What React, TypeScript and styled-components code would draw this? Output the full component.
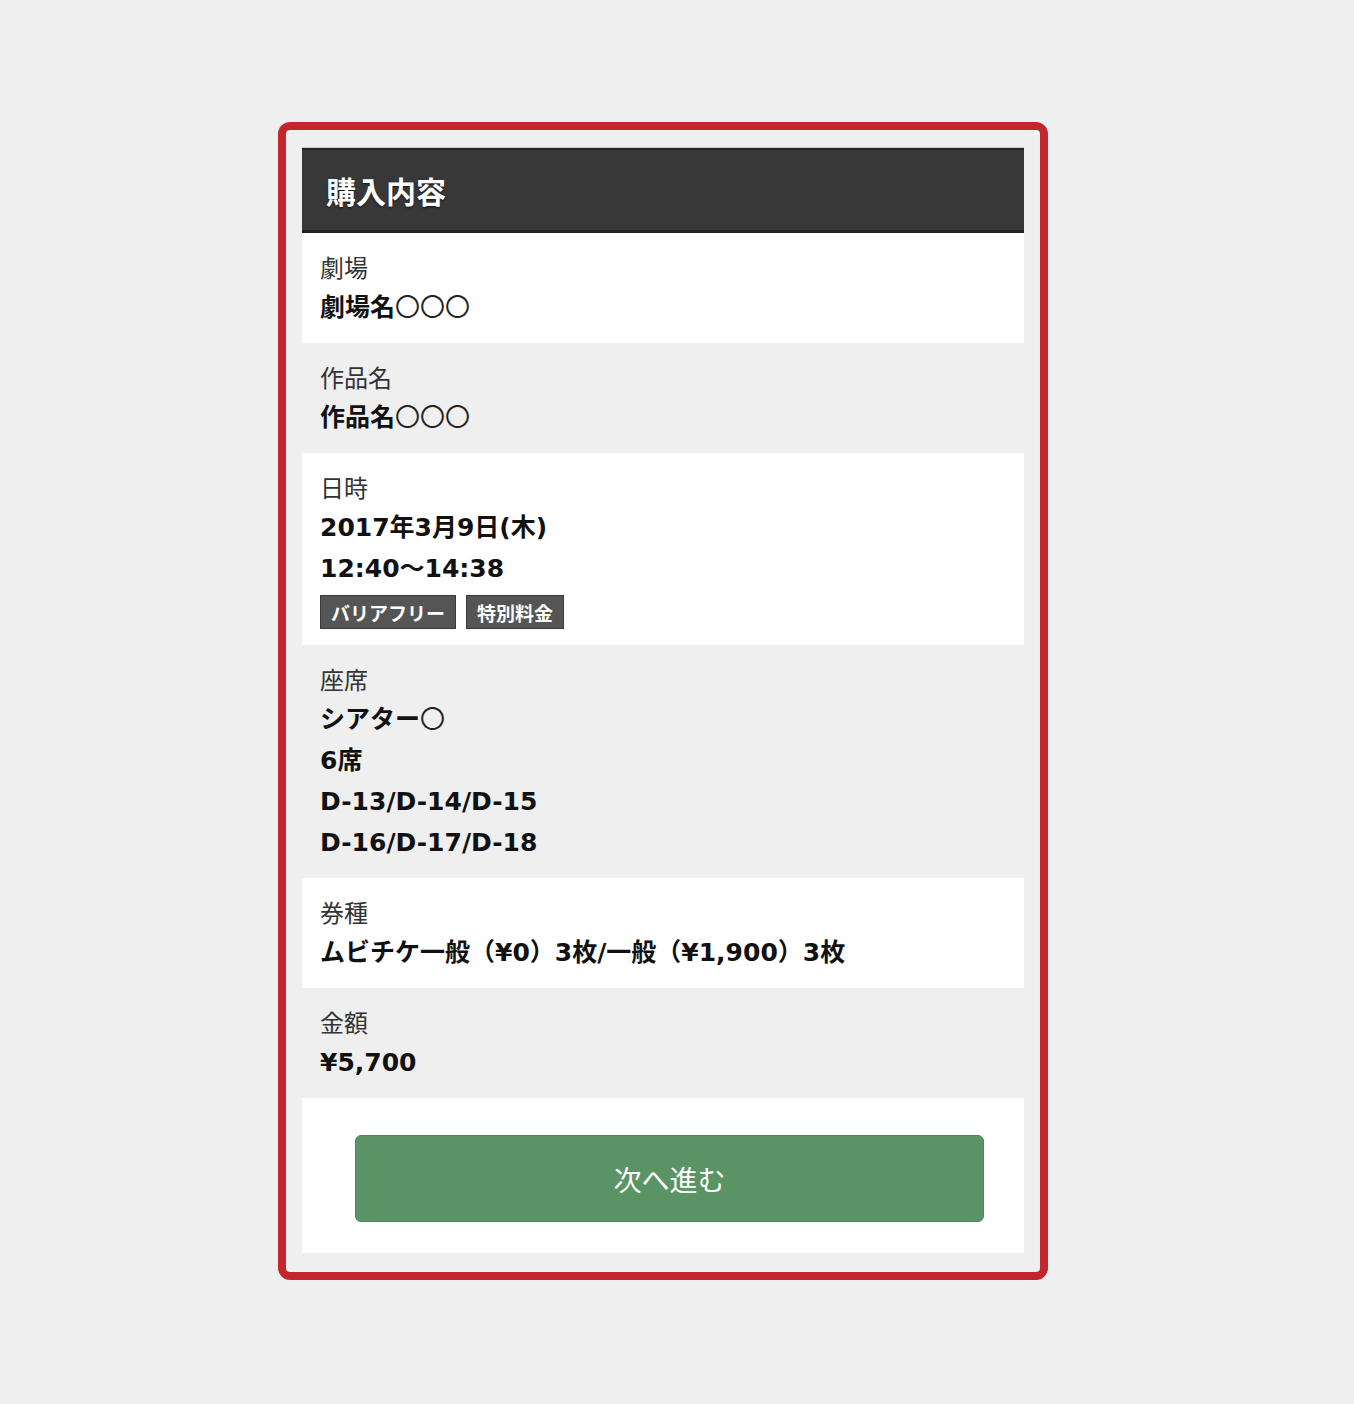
import React from 'react';
import styled, { createGlobalStyle } from 'styled-components';

const GlobalStyle = createGlobalStyle`
  body {
    margin: 0;
    background: #efefef;
    font-family: "DejaVu Sans", "Noto Sans CJK JP", sans-serif;
  }
`;

interface Field {
  label: string;
  values: string[];
  tags?: string[];
}

const fields: Field[] = [
  { label: '劇場', values: ['劇場名〇〇〇'] },
  { label: '作品名', values: ['作品名〇〇〇'] },
  { label: '日時', values: ['2017年3月9日(木)', '12:40〜14:38'], tags: ['バリアフリー', '特別料金'] },
  { label: '座席', values: ['シアター〇', '6席', 'D-13/D-14/D-15', 'D-16/D-17/D-18'] },
  { label: '券種', values: ['ムビチケ一般（¥0）3枚/一般（¥1,900）3枚'] },
  { label: '金額', values: ['¥5,700'] },
];

// placeholder circles are drawn thin in the original, even inside bold text
const renderValue = (v: string) =>
  v.split(/(〇+)/).map((part, i) =>
    part.startsWith('〇') ? <Placeholder key={i}>{part}</Placeholder> : part
  );

function App() {
  return (
    <>
      <GlobalStyle />
      <Frame>
        <Panel>
          <Header>購入内容</Header>
          {fields.map((f, i) => (
            <Section key={f.label} $alt={i % 2 === 1}>
              <Label>{f.label}</Label>
              {f.values.map((v) => (
                <Value key={v}>{renderValue(v)}</Value>
              ))}
              {f.tags && (
                <Tags>
                  {f.tags.map((t) => (
                    <Tag key={t}>{t}</Tag>
                  ))}
                </Tags>
              )}
            </Section>
          ))}
          <Actions>
            <NextButton>次へ進む</NextButton>
          </Actions>
        </Panel>
      </Frame>
    </>
  );
}

export default App;

const Frame = styled.div`
  box-sizing: border-box;
  width: 770px;
  margin: 122px 0 0 278px;
  border: 8px solid #c1272d;
  border-radius: 12px;
  padding: 18px 16px 19px 16px;
  background: #efefef;
`;

const Panel = styled.div`
  display: flex;
  flex-direction: column;
`;

const Header = styled.div`
  box-sizing: border-box;
  height: 85px;
  display: flex;
  align-items: center;
  padding: 0 24px;
  background: #383838;
  border-top: 2px solid #262626;
  border-bottom: 3px solid #222;
  box-shadow: 0 -1px 0 #c8c8c8;
  color: #fff;
  font-family: "Noto Sans CJK JP", sans-serif;
  font-weight: 700;
  font-size: 30px;
  text-shadow: 0 1px 2px rgba(0, 0, 0, 0.7);
`;

const Section = styled.div<{ $alt: boolean }>`
  padding: 13px 18px 15px;
  background: ${(p) => (p.$alt ? '#efefef' : '#ffffff')};
`;

const Label = styled.div`
  line-height: 41px;
  font-size: 24px;
  color: #333;
  font-family: "Noto Sans CJK JP", sans-serif;
`;

const Value = styled.div`
  line-height: 41px;
  font-size: 25px;
  font-weight: 700;
  color: #111;
`;

const Placeholder = styled.span`
  font-weight: 400;
  color: #222;
`;

const Tags = styled.div`
  display: flex;
  gap: 10px;
  margin: 6px 0 1px;
`;

const Tag = styled.span`
  box-sizing: border-box;
  height: 34px;
  display: inline-flex;
  align-items: center;
  padding: 0 10px;
  background: #555;
  border: 1px solid #3a3a3a;
  color: #fff;
  font-family: "Noto Sans CJK JP", sans-serif;
  font-weight: 700;
  font-size: 19px;
`;

const Actions = styled.div`
  background: #fff;
  padding: 37px 40px 31px 53px;
`;

const NextButton = styled.button`
  box-sizing: border-box;
  width: 100%;
  height: 87px;
  border: 1px solid #4c8757;
  border-radius: 6px;
  background: #5a9364;
  color: #fff;
  font-family: "Noto Sans CJK JP", sans-serif;
  font-size: 28px;
  cursor: pointer;
`;
